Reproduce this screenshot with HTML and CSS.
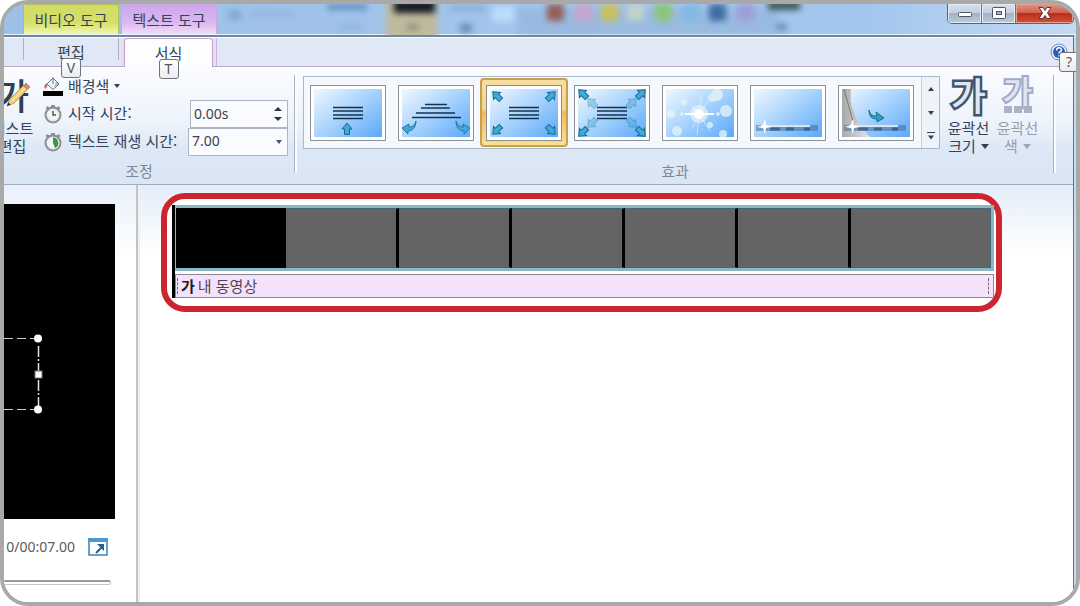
FILE: index.html
```
<!DOCTYPE html>
<html lang="ko">
<head>
<meta charset="utf-8">
<title>무비 메이커</title>
<link rel="stylesheet" href="styles.css">
</head>
<body>
<svg class="defs" aria-hidden="true">
  <defs>
    <linearGradient id="sky" x1="0" y1="0" x2="1" y2="0.9">
      <stop offset="0" stop-color="#f1f8fe"/><stop offset="0.5" stop-color="#a9d4fd"/><stop offset="1" stop-color="#62acfa"/>
    </linearGradient>
    <linearGradient id="fold" x1="0" y1="0" x2="1" y2="0">
      <stop offset="0" stop-color="#a8a8a8"/><stop offset="1" stop-color="#dfe6ee"/>
    </linearGradient>
    <symbol id="arrow" viewBox="-6 -6 12 12" overflow="visible">
      <path d="M0-6 5 0H2.500V5.500H-2.500V0H-5Z" fill="#3fa9d8" stroke="#1a6a93" stroke-width="1"/>
    </symbol>
    <symbol id="lines" viewBox="0 0 30 14">
      <path d="M0 1.500H30M0 5H30M0 9H30M0 12.500H30" stroke="#17324f" stroke-width="1.500"/>
    </symbol>
    <symbol id="shine" viewBox="0 0 68 14">
      <path d="M2 8H64" stroke="#47709c" stroke-width="6" opacity=".55"/>
      <path d="M16 9h10M32 9h8M50 9h6" stroke="#23466c" stroke-width="3" opacity=".6"/>
      <path d="M8 6H56" stroke="#fff" stroke-width="1.500"/>
      <path d="M11-2l1 7 6 2-6 1-1 6-2-6-6-1 6-2Z" fill="#fff"/>
    </symbol>
    <symbol id="watch" viewBox="0 0 20 20">
      <path d="M8 1h4v3H8zM2.500 4l2-2 2 2-2 2zM17.500 4l-2-2-2 2 2 2z" fill="#8a8f96"/>
      <circle cx="10" cy="11" r="7.500" fill="#f4f5f6" stroke="#8b8f95" stroke-width="2"/>
      <circle cx="10" cy="11" r="5.500" fill="none" stroke="#c9ccd0" stroke-dasharray="1 2"/>
    </symbol>
  </defs>
</svg>

<div class="frame">
  <header class="titlebar">
    <svg class="glass" width="860" height="31" viewBox="0 0 860 31" aria-hidden="true">
      <g class="blur">
        <rect x="225" y="6" width="12" height="10" fill="#7fa6d3"/><rect x="246" y="7" width="44" height="6" fill="#93b6df"/>
        <rect x="323" y="0" width="40" height="6" fill="#628ebf"/><rect x="334" y="20" width="24" height="6" fill="#93b4d8"/>
        <rect x="382" y="-4" width="51" height="40" fill="#bfba9d"/><rect x="390" y="-4" width="41" height="13" fill="#15191f"/>
        <rect x="403" y="20" width="12" height="6" fill="#8e917f"/><rect x="446" y="2" width="36" height="5" fill="#86a9d1"/>
        <rect x="456" y="20" width="12" height="8" fill="#6289b6"/><rect x="488" y="2" width="22" height="16" fill="#bcdcfb"/>
        <rect x="514" y="4" width="260" height="27" fill="#92b3d9" opacity=".6"/>
        <rect x="543" y="0" width="17" height="17" fill="#94605b"/><rect x="571" y="0" width="17" height="17" fill="#c7a3cc"/>
        <rect x="597" y="0" width="17" height="17" fill="#cabf5a"/><rect x="623" y="0" width="17" height="17" fill="#bfd3c9"/>
        <rect x="651" y="0" width="17" height="17" fill="#8ac673"/><rect x="678" y="0" width="17" height="17" fill="#81b9e4"/>
        <rect x="705" y="0" width="17" height="17" fill="#3f6ca1"/><rect x="733" y="0" width="17" height="17" fill="#9c9ed5"/>
        <rect x="764" y="-3" width="32" height="9" fill="#3c5550"/><rect x="773" y="20" width="10" height="6" fill="#5e82b0"/>
      </g>
    </svg>
    <span class="context context-video">비디오 도구</span>
    <span class="context context-text">텍스트 도구</span>
    <div class="window-buttons">
      <button class="winbtn" type="button" aria-label="최소화">
        <svg width="16" height="14" viewBox="0 0 16 14"><rect x="1.500" y="6.500" width="13" height="4" rx="1" fill="#fff" stroke="#4b5666"/></svg>
      </button>
      <button class="winbtn" type="button" aria-label="최대화">
        <svg width="16" height="14" viewBox="0 0 16 14"><rect x="1.500" y="1.500" width="13" height="11" rx="1" fill="#fff" stroke="#4b5666"/><rect x="5.500" y="5.500" width="5" height="3" fill="#a9b8ca" stroke="#4b5666"/></svg>
      </button>
      <button class="winbtn close" type="button" aria-label="닫기">
        <svg width="16" height="14" viewBox="0 0 16 14"><path d="M2 1.500h4L8 4.500 10 1.500H14L10.500 7l3.500 5.500H10L8 9.500 6 12.500H2l3.500-5.500Z" fill="#fff" stroke="#5d3535"/></svg>
      </button>
    </div>
  </header>

  <div class="client">
    <nav class="tabs">
      <button class="tab tab-edit" type="button">편집<kbd class="keytip">V</kbd></button>
      <div class="tab-wrap"><button class="tab tab-format" type="button">서식<kbd class="keytip">T</kbd></button></div>
      <button class="help" type="button" aria-label="도움말">
        <svg width="18" height="18" viewBox="0 0 18 18"><circle cx="9" cy="9" r="8" fill="#e8f0fb" stroke="#6f8fc4"/><circle cx="9" cy="9" r="6" fill="#2b5cb8"/><path d="M6.500 7.500C6.500 4 11.500 4 11.500 7 11.500 9 9 8.500 9 10.500M9 12v1.500" fill="none" stroke="#fff" stroke-width="1.500"/></svg>
        <kbd class="keytip">?</kbd>
      </button>
    </nav>

    <section class="ribbon">
      <div class="group group-adjust">
        <div class="group-body">
          <button class="big-button edit-text" type="button">
            <span class="glyph glyph-edit">가<svg class="pencil" width="28" height="28" viewBox="0 0 28 28"><path d="M2 26 5 19 21 3 25 7 9 23Z" fill="#f3d077" stroke="#7b6330"/><path d="M18 6 21 3 25 7 22 10Z" fill="#c98a72"/><path d="M2 26 3.500 22.500 5.500 24.500Z" fill="#222"/><path d="M7 21 20 8" stroke="#fff0b8"/></svg></span>
            <span>텍스트</span><span>편집</span>
          </button>
          <div class="fields">
            <button class="background-color" type="button">
              <svg width="20" height="20" viewBox="0 0 20 20"><path d="M4 8 10 2 16 8 10 13.500Z" fill="#eef3f8" stroke="#67707c"/><path d="M10 8V1.500" stroke="#67707c"/><path d="M4 7.500C1 8 1 11 2 13 4 12 4 10 5 8Z" fill="#c0705a"/><path d="M11 12 15.500 8 13 6Z" fill="#a6b6c8"/><rect x="0" y="15" width="20" height="5" fill="#000"/></svg>
              배경색
              <svg width="6" height="4" viewBox="0 0 6 4"><path d="M0 0H6L3 4Z" fill="#33404f"/></svg>
            </button>
            <div class="row">
              <svg width="20" height="20"><use href="#watch"/><path d="M10 7V11H13" fill="none" stroke="#555" stroke-width="1.500"/></svg>
              <label for="start">시작 시간:</label>
              <span class="field">
                <input id="start" type="text" value="0.00s">
                <svg class="spin" width="8" height="16" viewBox="0 0 8 16"><path d="M0 5H8L4 1ZM0 11H8L4 15Z" fill="#2b3542"/></svg>
              </span>
            </div>
            <div class="row">
              <svg width="20" height="20"><use href="#watch"/><path d="M10 5.500A5.500 5.500 0 0 1 12 16L10 11Z" fill="#37974a"/></svg>
              <label for="duration">텍스트 재생 시간:</label>
              <span class="field field-wide">
                <select id="duration"><option>7.00</option></select>
                <svg class="spin" width="6" height="4" viewBox="0 0 6 4"><path d="M0 0H6L3 4Z" fill="#4b5666"/></svg>
              </span>
            </div>
          </div>
        </div>
        <div class="group-label">조정</div>
      </div>

      <div class="group group-effects">
        <div class="group-body">
          <div class="gallery">
            <button class="effect" type="button" aria-label="위로 스크롤"><svg class="thumb" viewBox="0 0 68 48"><rect width="68" height="48" fill="url(#sky)"/><use href="#lines" x="19" y="17" width="30" height="14"/><use href="#arrow" x="27" y="34" width="12" height="12"/></svg></button>
            <button class="effect" type="button" aria-label="원근감"><svg class="thumb" viewBox="0 0 68 48"><rect width="68" height="48" fill="url(#sky)"/><path d="M23 15.500H45M19 19H48M14 24H53M10 28.500H59" stroke="#17324f" stroke-width="1.500"/><path d="M14 32C13 36 10 38 7 38V35L0 39 6 45V42C11 42 14 38 14 32ZM54 32C55 36 58 38 61 38V35L68 39 62 45V42C57 42 54 38 54 32Z" fill="#3fa9d8" stroke="#1a6a93" stroke-width=".8"/></svg></button>
            <button class="effect selected" type="button" aria-label="확대"><svg class="thumb" viewBox="0 0 68 48"><rect width="68" height="48" fill="url(#sky)"/><use href="#lines" x="19" y="17" width="30" height="14"/><g><use href="#arrow" x="-6" y="-6" width="12" height="12" transform="translate(7 7) rotate(-45)"/><use href="#arrow" x="-6" y="-6" width="12" height="12" transform="translate(61 7) rotate(45)"/><use href="#arrow" x="-6" y="-6" width="12" height="12" transform="translate(7 41) rotate(-135)"/><use href="#arrow" x="-6" y="-6" width="12" height="12" transform="translate(61 41) rotate(135)"/></g></svg></button>
            <button class="effect" type="button" aria-label="크게 확대"><svg class="thumb" viewBox="0 0 68 48"><rect width="68" height="48" fill="url(#sky)"/><use href="#lines" x="19" y="17" width="30" height="14"/><use href="#arrow" x="-6" y="-6" width="12" height="12" transform="translate(5 5) rotate(-45)"/><use href="#arrow" x="-6" y="-6" width="12" height="12" transform="translate(63 5) rotate(45)"/><use href="#arrow" x="-6" y="-6" width="12" height="12" transform="translate(5 43) rotate(-135)"/><use href="#arrow" x="-6" y="-6" width="12" height="12" transform="translate(63 43) rotate(135)"/><g opacity=".4"><use href="#arrow" x="-6" y="-6" width="12" height="12" transform="translate(14 14) rotate(-45)"/><use href="#arrow" x="-6" y="-6" width="12" height="12" transform="translate(54 14) rotate(45)"/><use href="#arrow" x="-6" y="-6" width="12" height="12" transform="translate(14 34) rotate(-135)"/><use href="#arrow" x="-6" y="-6" width="12" height="12" transform="translate(54 34) rotate(135)"/></g></svg></button>
            <button class="effect" type="button" aria-label="반짝임"><svg class="thumb" viewBox="0 0 68 48"><rect width="68" height="48" fill="url(#sky)"/><g fill="#e4f6f5" opacity=".75"><circle cx="51" cy="6" r="6"/><circle cx="46" cy="9" r="4"/><circle cx="60" cy="22" r="6"/><circle cx="5" cy="25" r="4"/><circle cx="11" cy="42" r="5"/><circle cx="44" cy="36" r="3"/><circle cx="57" cy="45" r="4"/><circle cx="18" cy="13" r="3"/><circle cx="52" cy="25" r="2"/><circle cx="16" cy="25" r="2"/></g><path d="M33 25 36 4M33 25 31 46M33 25 42 12M33 25 44 42M33 25 24 15M33 25 26 40" stroke="#e9f7ff" stroke-width=".6"/><circle cx="33" cy="25" r="9" fill="#fff" opacity=".5"/><circle cx="33" cy="25" r="5" fill="#fff"/><path d="M19 25H48" stroke="#fff" stroke-width="2"/></svg></button>
            <button class="effect" type="button" aria-label="빛줄기"><svg class="thumb" viewBox="0 0 68 48"><rect width="68" height="48" fill="url(#sky)"/><use href="#shine" x="0" y="31" width="68" height="14"/></svg></button>
            <button class="effect" type="button" aria-label="넘기기"><svg class="thumb" viewBox="0 0 68 48"><rect width="68" height="48" fill="url(#sky)"/><path d="M0 0H9C7 16 12 30 28 48H0Z" fill="url(#fold)"/><path d="M2 0 12 36" stroke="#777"/><path d="M27 21C28 26 31 27 35 27L34 23 42 29 35 33V30C30 30 27 28 27 21Z" fill="#27a1c7" stroke="#155b7c" stroke-width=".8"/><use href="#shine" x="0" y="31" width="68" height="14"/></svg></button>
            <div class="gallery-nav">
              <button type="button" aria-label="이전"><svg width="6" height="4" viewBox="0 0 6 4"><path d="M0 4H6L3 0Z" fill="#33404f"/></svg></button>
              <button type="button" aria-label="다음"><svg width="6" height="4" viewBox="0 0 6 4"><path d="M0 0H6L3 4Z" fill="#33404f"/></svg></button>
              <button type="button" aria-label="자세히"><svg width="8" height="8" viewBox="0 0 8 8"><path d="M0 .500H8" stroke="#33404f"/><path d="M1 3.500H7L4 7.500Z" fill="#33404f"/></svg></button>
            </div>
          </div>
          <button class="big-button" type="button">
            <span class="glyph glyph-size">가</span>
            <span>윤곽선</span>
            <span class="with-arrow">크기 <svg width="8" height="5" viewBox="0 0 8 5"><path d="M0 0H8L4 5Z" fill="#33404f"/></svg></span>
          </button>
          <button class="big-button disabled" type="button" disabled>
            <span class="glyph glyph-color">가<svg class="swatches" width="28" height="7" viewBox="0 0 28 7"><path d="M0 0h8v7H0zM10 0h8v7h-8zM20 0h8v7h-8z" fill="#adb1c8"/></svg></span>
            <span>윤곽선</span>
            <span class="with-arrow">색 <svg width="8" height="5" viewBox="0 0 8 5"><path d="M0 0H8L4 5Z" fill="#a0a3b0"/></svg></span>
          </button>
        </div>
        <div class="group-label">효과</div>
      </div>
    </section>

    <main class="workspace">
      <aside class="preview">
        <div class="screen">
          <svg width="40" height="84" viewBox="0 0 40 84"><path d="M0 6.500H34M0 77.500H34" stroke="#c9c9c9" stroke-dasharray="9 4"/><path d="M34.500 14V74" stroke="#e4e4e4" stroke-width="1.500" stroke-dasharray="11 2 2 2"/><circle cx="34" cy="6.500" r="4" fill="#fff"/><circle cx="34" cy="77.500" r="4" fill="#fff"/><rect x="31" y="39" width="7" height="7" fill="#fff" stroke="#777"/></svg>
        </div>
        <div class="time">
          <span>0/00:07.00</span>
          <button class="fullscreen" type="button" aria-label="전체 화면">
            <svg width="20" height="18" viewBox="0 0 20 18"><rect x="1" y="1" width="18" height="16" fill="#fff" stroke="#3f80b8" stroke-width="1.500"/><path d="M0 0H20V4H0Z" fill="#4f97cf"/><path d="M8 15 14 9" stroke="#255f91" stroke-width="2"/><path d="M9 6H16V13Z" fill="#255f91"/></svg>
          </button>
        </div>
        <div class="seek"></div>
      </aside>
      <section class="timeline">
        <div class="highlight">
          <div class="playhead"></div>
          <div class="tracks">
            <div class="clip">
              <span class="shot black"></span><span class="shot first"></span><span class="shot"></span><span class="shot"></span><span class="shot"></span><span class="shot"></span><span class="shot last"></span>
            </div>
            <div class="caption"><b>가</b><span>내 동영상</span></div>
          </div>
        </div>
      </section>
    </main>
  </div>
</div>
</body>
</html>
```

FILE: styles.css
```
* {
  box-sizing: border-box;
}

body {
  margin: 0;
  background: #fff;
  color: #33435a;
  font: 15px/18px "Noto Sans CJK KR", sans-serif;
}

button {
  margin: 0;
  padding: 0;
  border: 0;
  background: none;
  color: inherit;
  font: inherit;
}

svg {
  display: block;
  flex: none;
}

.defs {
  position: absolute;
  width: 0;
  height: 0;
}

.frame {
  display: flex;
  flex-direction: column;
  min-height: 100vh;
  overflow: hidden;
  border: 4px solid #a9a9a9;
  border-radius: 28px;
  background: #c5dcf3;
}

/* Title bar */
.titlebar {
  position: relative;
  display: flex;
  gap: 2px;
  height: 31px;
  padding-left: 19px;
  border-bottom: 1px solid #e8f3fe;
  background: linear-gradient(90deg, #9dc0e8, #a5c6ec 60%, #a3c6ee 80%, #c3daf3);
}

.glass {
  position: absolute;
  top: 0;
  left: 0;
}

.blur {
  filter: blur(3px);
}

.context {
  position: relative;
  width: 96px;
  padding-top: 6px;
  border: 1px solid #b3bd62;
  border-bottom: 0;
  background: linear-gradient(#d3dc62, #d5df6a 60%, #f0f6ae);
  text-align: center;
}

.context-text {
  border-color: #c7a9e0;
  background: linear-gradient(#cda6ec, #d9b8f0 60%, #f4dcf6);
}

.window-buttons {
  position: relative;
  display: flex;
  align-self: flex-start;
  margin-left: auto;
  margin-right: 2px;
  overflow: hidden;
  border: 1px solid #55657a;
  border-top: 0;
  border-radius: 0 0 5px 5px;
}

.winbtn {
  display: grid;
  place-items: center;
  width: 34px;
  height: 19px;
  padding-bottom: 2px;
  border-right: 1px solid #66758a;
  background: linear-gradient(#d5e0ed, #c4d0df 45%, #a2b1c4 50%, #bccbdd);
  box-shadow: inset 0 0 0 1px #e3ebf4;
}

.winbtn.close {
  width: 57px;
  border-right: 0;
  background: linear-gradient(#dd9487, #cf6552 45%, #bd2d17 50%, #d0543a);
  box-shadow: inset 0 0 0 1px #e6a195;
}

/* Tabs */
.client {
  display: flex;
  flex: 1;
  flex-direction: column;
  margin-right: 2px;
  border-top: 2px solid #70859a;
  border-right: 1px solid #5f7386;
  background: #fff;
}

.tabs {
  position: relative;
  z-index: 1;
  display: flex;
  gap: 2px;
  height: 30px;
  padding-left: 19px;
  border-top: 1px solid #fff;
  border-bottom: 1px solid #b7a9c8;
  background: #dfe8f4;
}

.tab {
  position: relative;
}

.tab-edit {
  width: 96px;
  height: 22px;
  padding-top: 5px;
  border: 1px solid #a9b5c5;
  border-width: 0 1px;
}

.tab-wrap {
  width: 96px;
  padding: 0 3px;
  border-right: 1px solid #c9b6d8;
  background: #f0daf3;
}

.tab-format {
  width: 89px;
  height: 29px;
  padding-bottom: 1px;
  border: 1px solid #c0a2cf;
  border-bottom: 0;
  border-radius: 4px 4px 0 0;
  background: #fcfdff;
}

.keytip {
  position: absolute;
  top: 20px;
  left: 50%;
  width: 20px;
  margin-left: -10px;
  border: 1px solid #6d7480;
  border-radius: 3px;
  background: linear-gradient(#fff, #ececf0);
  color: #505760;
  font: 14px/18px "Noto Sans", sans-serif;
  text-align: center;
}

.help {
  position: relative;
  align-self: flex-start;
  margin: 5px 5px 0 auto;
}

.help .keytip {
  top: 9px;
  left: 19px;
}

/* Ribbon */
.ribbon {
  display: flex;
  height: 118px;
  padding-right: 17px;
  overflow: hidden;
  border-bottom: 1px solid #9cadc4;
  background: linear-gradient(#fbfcff, #eef4fb 45%, #dde8f5 70%, #dbe6f5);
}

.group {
  position: relative;
  display: flex;
  flex-direction: column;
  padding-top: 9px;
}

.group::after {
  position: absolute;
  top: 8px;
  right: 0;
  bottom: 11px;
  width: 2px;
  border-left: 1px solid #a9b5c6;
  background: #fafcff;
  content: "";
}

.group-adjust {
  flex: none;
  width: 316px;
  margin-left: -23px;
}

.group-effects {
  flex: 1;
  padding-left: 6px;
  padding-right: 9px;
}

.group-body {
  display: flex;
  flex: 1;
}

.group-label {
  height: 22px;
  color: #7b879a;
  text-align: center;
}

.big-button {
  display: flex;
  flex: none;
  flex-direction: column;
  align-items: center;
  width: 49px;
  height: 81px;
  margin-top: -2px;
  white-space: nowrap;
}

.gallery + .big-button {
  margin-left: 4px;
}

.edit-text {
  margin-left: 7px;
}

.disabled {
  color: #9a9eac;
}

.glyph {
  position: relative;
  height: 45px;
  font-size: 38px;
  font-weight: 500;
  line-height: 40px;
  paint-order: stroke fill;
}

.glyph-edit {
  color: #2d4054;
  font-size: 36px;
}

.glyph-size {
  color: #dfe7f2;
  -webkit-text-stroke: 5px #42556b;
}

.glyph-color {
  color: #dfe3f4;
  font-size: 32px;
  line-height: 32px;
  -webkit-text-stroke: 4px #9fa9c8;
}

.pencil {
  position: absolute;
  top: 6px;
  left: 9px;
}

.swatches {
  position: absolute;
  top: 32px;
  left: 1px;
}

.with-arrow {
  display: flex;
  gap: 5px;
  align-items: center;
}

.fields {
  display: flex;
  flex: 1;
  flex-direction: column;
  margin-left: 6px;
  padding-right: 9px;
}

.background-color,
.row {
  display: flex;
  gap: 5px;
  align-items: center;
}

.background-color {
  height: 20px;
  margin-bottom: 4px;
}

.row {
  height: 28px;
}

.row label {
  padding-bottom: 2px;
}

.field {
  position: relative;
  width: 98px;
  margin-left: auto;
}

.field-wide {
  width: 100px;
}

.field input,
.field select {
  display: block;
  width: 100%;
  height: 28px;
  padding: 0 0 2px 3px;
  appearance: none;
  border: 1px solid #aab6c7;
  border-radius: 0;
  outline: 0;
  background: #f9fbfe;
  color: #39424f;
  font: 14px/20px "Noto Sans", sans-serif;
}

.spin {
  position: absolute;
  top: 0;
  right: 6px;
  bottom: 0;
  margin: auto;
  pointer-events: none;
}

/* Effects gallery */
.gallery {
  display: flex;
  flex: none;
  height: 73px;
  border: 1px solid #a9b7cb;
  background: #f5f8fd;
}

.effect {
  display: grid;
  place-items: center;
  width: 88px;
  height: 69px;
  margin-top: 1px;
}

.selected {
  border: 2px solid #c7a04f;
  border-radius: 4px;
  background: linear-gradient(#f8dda0, #f6d48c 45%, #eebb5b 50%, #fbdf93);
}

.thumb {
  width: 76px;
  height: 56px;
  padding: 3px;
  border: 1px solid #8a8f98;
  background: #fff;
}

.gallery-nav {
  display: flex;
  flex-direction: column;
  width: 18px;
  margin-left: 1px;
  border-left: 1px solid #c3cede;
  background: #eef3fa;
}

.gallery-nav button {
  display: grid;
  flex: 1;
  place-items: center;
}

/* Workspace */
.workspace {
  display: flex;
  flex: 1;
}

.preview {
  width: 134px;
  padding-top: 19px;
  border-right: 2px solid #c3c3c3;
  background: linear-gradient(#e9f0fa, #fff 70px);
}

.screen {
  display: flex;
  align-items: flex-start;
  width: 111px;
  height: 315px;
  padding-top: 128px;
  background: #000;
}

.time {
  display: flex;
  gap: 13px;
  align-items: center;
  justify-content: flex-end;
  margin-top: 18px;
  padding-right: 28px;
  color: #5c5c5c;
  font: 14px/20px "Noto Sans", sans-serif;
}

.seek {
  width: 107px;
  height: 5px;
  margin-top: 23px;
  border: 1px solid #c5c5c5;
  border-top: 2px solid #999;
  border-left: 0;
  border-radius: 0 3px 3px 0;
}

.timeline {
  flex: 1;
  padding: 8px 71px 0 21px;
  border-left: 2px solid #f0f0f0;
  background: linear-gradient(#e4edf9, #fff 70px);
}

.highlight {
  display: flex;
  padding: 6px 2px 8px 5px;
  border: 6px solid #cc2530;
  border-radius: 24px;
  background: #fff;
}

.playhead {
  width: 3px;
  background: #000;
}

.tracks {
  flex: 1;
}

.clip {
  display: flex;
  height: 66px;
  margin-bottom: 3px;
  border: 3px solid #8cb5c6;
  border-left-width: 1px;
  background: #646464;
}

.shot {
  flex: 113 1 0;
  border: 1px solid #41687a;
  border-width: 1px 0;
  border-right: 3px solid #000;
}

.black {
  background: #000;
  border: 0;
}

.first {
  flex-grow: 112;
}

.last {
  flex-grow: 142;
  border-right: 1px solid #41687a;
}

.caption {
  display: flex;
  gap: 3px;
  align-items: center;
  height: 24px;
  padding: 0 4px;
  border: 1px solid #8d8692;
  background: #f4e2fb;
  color: #4d4653;
}

.caption::before,
.caption::after {
  height: 16px;
  border-left: 1px dashed #75697c;
  content: "";
}

.caption::before {
  margin-left: -3px;
}

.caption::after {
  margin-left: auto;
}

.caption b {
  color: #1c1c1c;
}
```
